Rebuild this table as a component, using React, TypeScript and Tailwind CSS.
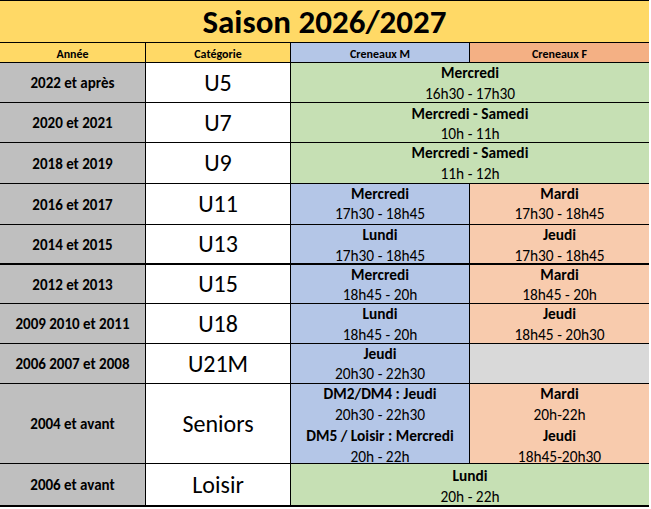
import React from 'react';

type Slot = { day: string; time: string }[];

const font = { fontFamily: 'Carlito, Calibri, Lato, "Open Sans", sans-serif' };

const SlotCell = ({ lines, className }: { lines: Slot; className: string }) => (
  <div className={`flex flex-col items-center justify-start text-[15.4px] text-black ${className}`}>
    {lines.map((l, i) => (
      <React.Fragment key={i}>
        <div className="font-bold">{l.day}</div>
        <div>{l.time}</div>
      </React.Fragment>
    ))}
  </div>
);

const Row = ({ year, cat, children }: { year: string; cat: string; children: React.ReactNode }) => (
  <>
    <div className="bg-[#bfbfbf] flex items-center justify-center text-[15px] font-bold text-black pt-[2px]">{year}</div>
    <div className="bg-white flex items-center justify-center text-[24px] text-black">{cat}</div>
    {children}
  </>
);

export default function App() {
  return (
    <div className="w-[651px] h-[509px] bg-white" style={font}>
      <div className="grid grid-cols-[145px_144px_178px_179px] grid-rows-[41px_19px_39px_39px_40px_40px_38px_0px_38px_39px_39px_79px_41px] gap-px bg-black border-t border-r-2 border-b-2 border-black w-[649px]">
        <div className="col-span-4 bg-[#ffd966] flex items-center justify-center text-[33px] font-bold text-black pt-[2px]">
          Saison 2026/2027
        </div>
        <div className="bg-[#ffd966] flex items-center justify-center text-[12px] font-bold pt-[3px]">Année</div>
        <div className="bg-[#ffd966] flex items-center justify-center text-[12px] font-bold pt-[3px]">Catégorie</div>
        <div className="bg-[#b4c6e7] flex items-center justify-center text-[12px] font-bold pt-[3px]">Creneaux M</div>
        <div className="bg-[#f4b084] flex items-center justify-center text-[12px] font-bold pt-[3px]">Creneaux F</div>

        <Row year="2022 et après" cat="U5">
          <SlotCell className="col-span-2 bg-[#c6e0b4] leading-[16px] pt-[2px] gap-[5px]" lines={[{ day: 'Mercredi', time: '16h30 - 17h30' }]} />
        </Row>
        <Row year="2020 et 2021" cat="U7">
          <SlotCell className="col-span-2 bg-[#c6e0b4] leading-[16px] pt-[3px] gap-[4px]" lines={[{ day: 'Mercredi - Samedi', time: '10h - 11h' }]} />
        </Row>
        <Row year="2018 et 2019" cat="U9">
          <SlotCell className="col-span-2 bg-[#c6e0b4] leading-[16px] pt-[2px] gap-[5px]" lines={[{ day: 'Mercredi - Samedi', time: '11h - 12h' }]} />
        </Row>
        <Row year="2016 et 2017" cat="U11">
          <SlotCell className="bg-[#b4c6e7] leading-[16px] pt-[2px] gap-[4px]" lines={[{ day: 'Mercredi', time: '17h30 - 18h45' }]} />
          <SlotCell className="bg-[#f8cbad] leading-[16px] pt-[2px] gap-[4px]" lines={[{ day: 'Mardi', time: '17h30 - 18h45' }]} />
        </Row>
        <Row year="2014 et 2015" cat="U13">
          <SlotCell className="bg-[#b4c6e7] leading-[15px] pt-[2px] gap-[6px]" lines={[{ day: 'Lundi', time: '17h30 - 18h45' }]} />
          <SlotCell className="bg-[#f8cbad] leading-[15px] pt-[2px] gap-[6px]" lines={[{ day: 'Jeudi', time: '17h30 - 18h45' }]} />
        </Row>
        {/* thick separator */}
        <div className="col-span-4 bg-black" />
        <Row year="2012 et 2013" cat="U15">
          <SlotCell className="bg-[#b4c6e7] leading-[16px] pt-[2px] gap-[4px]" lines={[{ day: 'Mercredi', time: '18h45 - 20h' }]} />
          <SlotCell className="bg-[#f8cbad] leading-[16px] pt-[2px] gap-[4px]" lines={[{ day: 'Mardi', time: '18h45 - 20h' }]} />
        </Row>
        <Row year="2009 2010 et 2011" cat="U18">
          <SlotCell className="bg-[#b4c6e7] leading-[16px] pt-[2px] gap-[5px]" lines={[{ day: 'Lundi', time: '18h45 - 20h' }]} />
          <SlotCell className="bg-[#f8cbad] leading-[16px] pt-[2px] gap-[5px]" lines={[{ day: 'Jeudi', time: '18h45 - 20h30' }]} />
        </Row>
        <Row year="2006 2007 et 2008" cat="U21M">
          <SlotCell className="bg-[#b4c6e7] leading-[16px] pt-[2px] gap-[4px]" lines={[{ day: 'Jeudi', time: '20h30 - 22h30' }]} />
          <div className="bg-[#d9d9d9]" />
        </Row>
        <Row year="2004 et avant" cat="Seniors">
          <SlotCell
            className="bg-[#b4c6e7] leading-[12px] pt-[4px] gap-[9px]"
            lines={[
              { day: 'DM2/DM4 : Jeudi', time: '20h30 - 22h30' },
              { day: 'DM5 / Loisir : Mercredi', time: '20h - 22h' },
            ]}
          />
          <SlotCell
            className="bg-[#f8cbad] leading-[12px] pt-[4px] gap-[9px]"
            lines={[
              { day: 'Mardi', time: '20h-22h' },
              { day: 'Jeudi', time: '18h45-20h30' },
            ]}
          />
        </Row>
        <Row year="2006 et avant" cat="Loisir">
          <SlotCell className="col-span-2 bg-[#c6e0b4] leading-[12px] pt-[6px] gap-[9px]" lines={[{ day: 'Lundi', time: '20h - 22h' }]} />
        </Row>
      </div>
    </div>
  );
}
